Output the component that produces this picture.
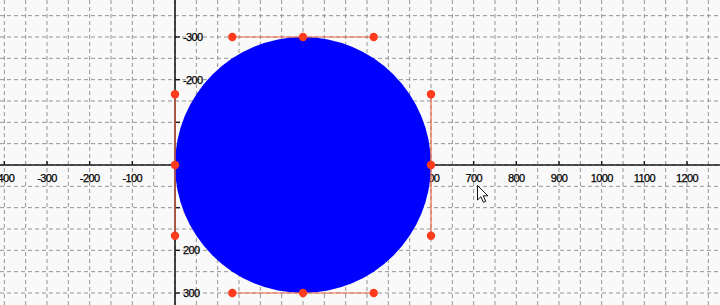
const OX = 175;
const OY = 165;
const S = 128 / 300; // px per unit
const GRID = 50 * S;

const vGrid = [];
for (let n = -8; n <= 25; n++) vGrid.push(OX + n * GRID);
const hGrid = [];
for (let n = -7; n <= 6; n++) hGrid.push(OY + n * GRID);

const xTicks = [];
for (let k = -4; k <= 12; k++) if (k !== 0) xTicks.push(k * 100);
const yTicks = [-300, -200, -100, 100, 200, 300];

const cx = OX + 300 * S;
const r = 300 * S;
const h = r * 0.5523;

const handles = [
  [[cx - h, OY - r], [cx, OY - r], [cx + h, OY - r]],
  [[cx - h, OY + r], [cx, OY + r], [cx + h, OY + r]],
  [[OX, OY - h], [OX, OY], [OX, OY + h]],
  [[cx + r, OY - h], [cx + r, OY], [cx + r, OY + h]],
];

const Cursor = ({ x, y }) => (
  <path
    transform={`translate(${x} ${y})`}
    d="M0 0 L0 14.5 L3.4 11.2 L5.9 16.8 L8.2 15.8 L5.8 10.3 L10.4 10.3 Z"
    fill="#fff"
    stroke="#111"
    strokeWidth="1"
    strokeLinejoin="round"
  />
);

export default function App() {
  return (
    <div className="w-[720px] h-[305px] bg-[#f9f9f9] overflow-hidden">
      <svg width="720" height="305" className="block" style={{ fontFamily: '"Liberation Sans", Arial, sans-serif' }}>
        {vGrid.map((x) => (
          <line key={"v" + x} x1={x} y1="0" x2={x} y2="305" stroke="#939393" strokeWidth="1" strokeDasharray="4 3" />
        ))}
        {hGrid.map((y) => (
          <line key={"h" + y} x1="0" y1={y} x2="720" y2={y} stroke="#939393" strokeWidth="1" strokeDasharray="4 3" />
        ))}

        <line x1="0" y1={OY} x2="720" y2={OY} stroke="#1a1a1a" strokeWidth="1.6" />
        <line x1={OX} y1="0" x2={OX} y2="305" stroke="#1a1a1a" strokeWidth="1.6" />

        {xTicks.map((v) => {
          const x = OX + v * S;
          return (
            <g key={"xt" + v}>
              <line x1={x} y1={OY - 4} x2={x} y2={OY} stroke="#1a1a1a" strokeWidth="1.4" />
              <text x={x} y={OY + 17} fontSize="11" textAnchor="middle" fill="#000" stroke="#000" strokeWidth="0.25" letterSpacing="-0.6">
                {v}
              </text>
            </g>
          );
        })}
        {yTicks.map((v) => {
          const y = OY + v * S;
          return (
            <g key={"yt" + v}>
              <line x1={OX} y1={y} x2={OX + 5} y2={y} stroke="#1a1a1a" strokeWidth="1.4" />
              <text x={OX + 8} y={y + 4} fontSize="11" fill="#000" stroke="#000" strokeWidth="0.25" letterSpacing="-0.6">
                {v}
              </text>
            </g>
          );
        })}

        <circle cx={cx} cy={OY} r={r} fill="#0000ff" />

        {handles.map((g, i) => (
          <g key={"hd" + i}>
            <line x1={g[0][0]} y1={g[0][1]} x2={g[2][0]} y2={g[2][1]} stroke="#f0684a" strokeWidth="1.2" />
            {g.map(([x, y], j) => (
              <circle key={j} cx={x} cy={y} r="4.2" fill="#ff3b1e" />
            ))}
          </g>
        ))}

        <Cursor x={477.5} y={185.5} />
      </svg>
    </div>
  );
}
